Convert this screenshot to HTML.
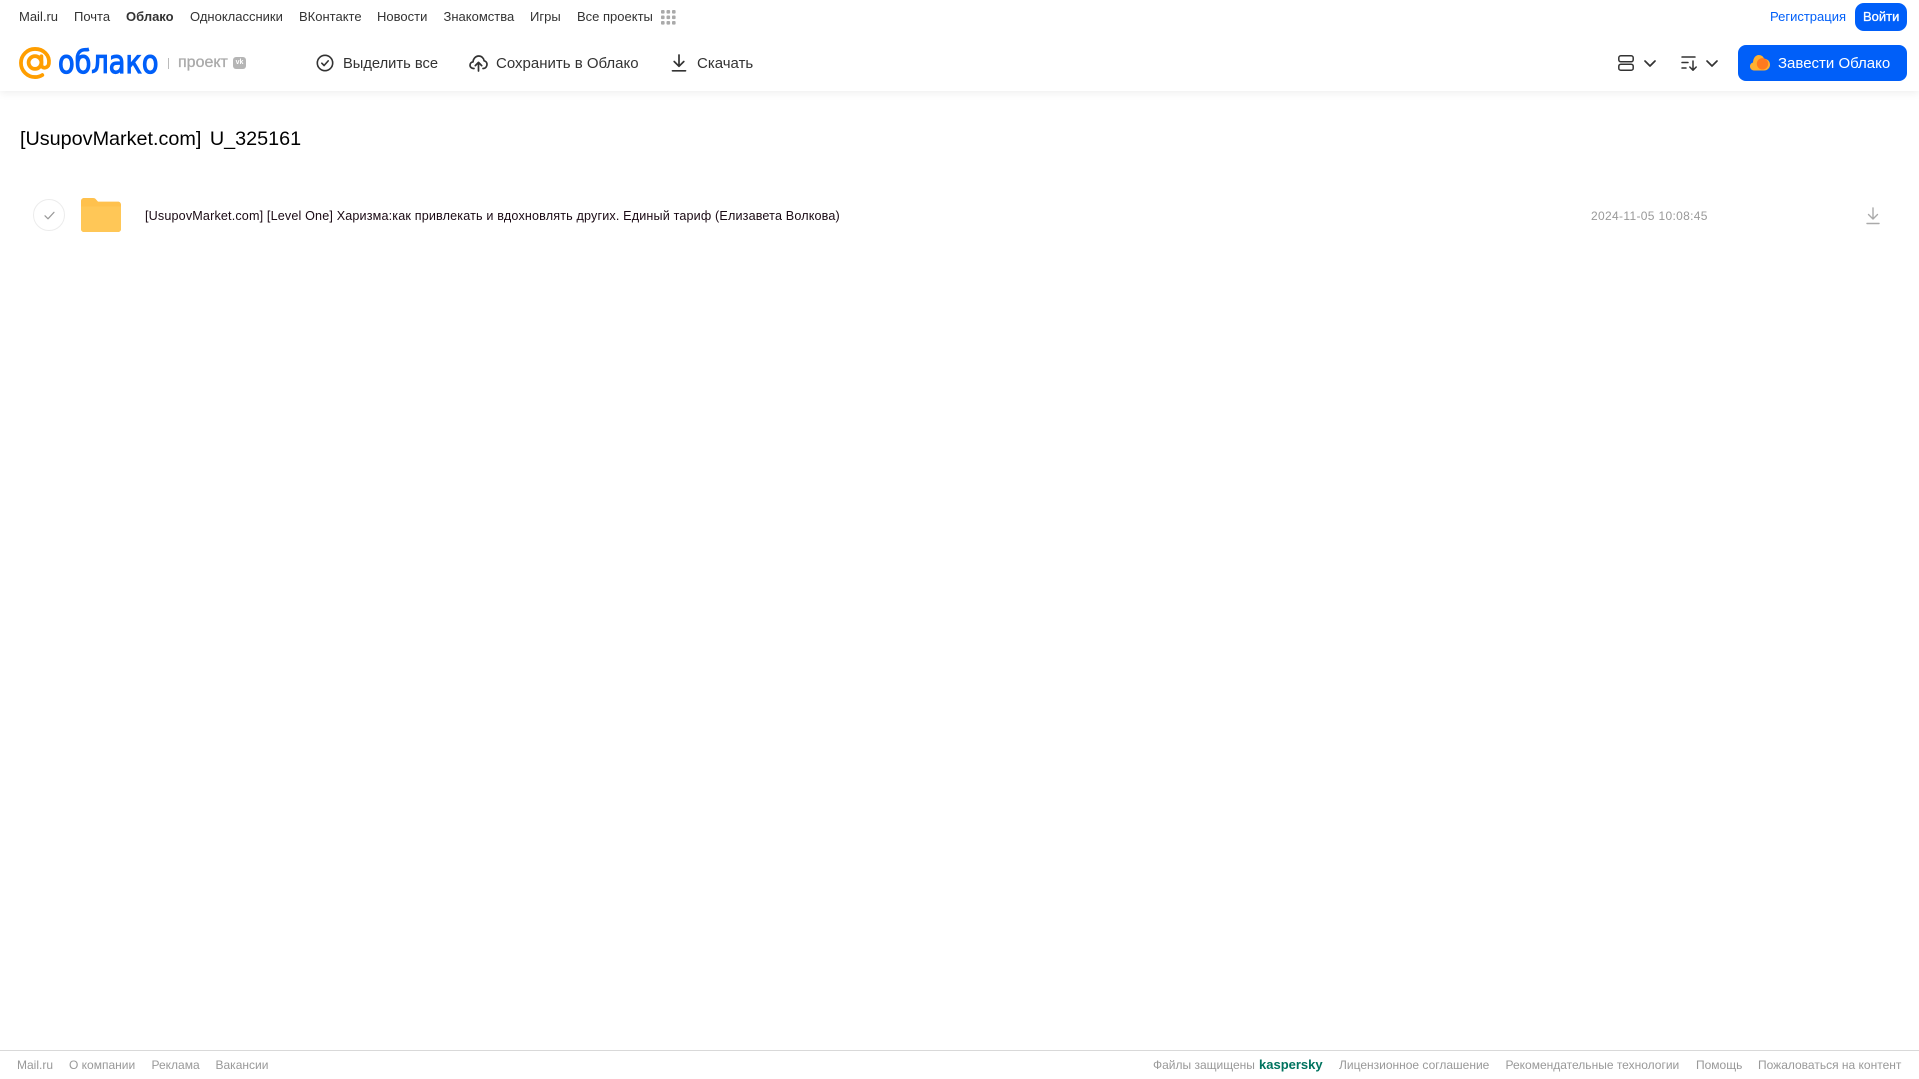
<!DOCTYPE html>
<html lang="ru">
<head>
<meta charset="utf-8">
<title>[UsupovMarket.com] U_325161</title>
<style>
html,body{margin:0;padding:0;background:#fff;}
body{width:1919px;height:1079px;position:relative;overflow:hidden;font-family:"Liberation Sans",Arial,sans-serif;}
.t{position:absolute;white-space:nowrap;line-height:20px;}
.n{top:7px;font-size:13px;color:#333;}
.b{top:54px;font-size:15px;color:#333;}
.f{top:1055px;font-size:12px;color:#999;}
svg{position:absolute;display:block;overflow:visible;}
#hdr{position:absolute;left:0;top:0;width:1919px;height:91px;background:#fff;box-shadow:0 2px 8px rgba(0,0,0,.07);}
</style>
</head>
<body>
<div id="hdr"></div>

<span class="t n" style="left:19px">Mail.ru</span>
<span class="t n" style="left:74px">Почта</span>
<span class="t n" style="left:126px;font-weight:bold">Облако</span>
<span class="t n" style="left:190px">Одноклассники</span>
<span class="t n" style="left:299px">ВКонтакте</span>
<span class="t n" style="left:377px">Новости</span>
<span class="t n" style="left:443.500px">Знакомства</span>
<span class="t n" style="left:530px">Игры</span>
<span class="t n" style="left:577px">Все проекты</span>
<svg style="left:661px;top:10px" width="15" height="15" fill="#aaa"><rect x="0" y="0" width="3.6" height="3.6" rx="1"/><rect x="5.5" y="0" width="3.6" height="3.6" rx="1"/><rect x="11" y="0" width="3.6" height="3.6" rx="1"/><rect x="0" y="5.5" width="3.6" height="3.6" rx="1"/><rect x="5.5" y="5.5" width="3.6" height="3.6" rx="1"/><rect x="11" y="5.5" width="3.6" height="3.6" rx="1"/><rect x="0" y="11" width="3.6" height="3.6" rx="1"/><rect x="5.5" y="11" width="3.6" height="3.6" rx="1"/><rect x="11" y="11" width="3.6" height="3.6" rx="1"/></svg>

<span class="t n" style="left:1770px;color:#005ff9">Регистрация</span>
<div style="position:absolute;left:1855px;top:3px;width:52px;height:28px;border-radius:9px;background:#005ff9"></div>
<span class="t n" style="left:1863px;color:#fff;font-size:13px;-webkit-text-stroke:.3px #fff">Войти</span>

<svg style="left:19px;top:47px" width="32" height="32" viewBox="0 0 33 33" fill="none" stroke="#ff9e00" stroke-width="3.9" stroke-linecap="round"><circle cx="16.5" cy="16" r="6.6"/><path d="M23.1 9.5v8.6c0 4.6 6.9 4.4 7.7-.9C32 8.300 25 2 16.500 2 8.500 2 2 8.500 2 16.500S8.500 31 16.500 31c3 0 5.500-.8 7.500-2.100"/></svg>
<span class="t" style="left:58px;top:46px;font-size:32px;line-height:32px;color:#005ff9;-webkit-text-stroke:1.2px #005ff9;font-family:'DejaVu Sans','Liberation Sans',sans-serif;transform-origin:0 50%;transform:scaleX(.85)">облако</span>
<div style="position:absolute;left:168px;top:58px;width:1px;height:11px;background:#bbb"></div>
<span class="t" style="left:178px;top:53px;font-size:16px;color:#aaa;-webkit-text-stroke:.3px #aaa">проект</span>
<div style="position:absolute;left:233px;top:57px;width:13px;height:12px;border-radius:3px;background:#b5b5b5;color:#fff;font-size:7px;font-weight:bold;line-height:12px;text-align:center">vk</div>

<svg style="left:316px;top:54px" width="18" height="18" viewBox="0 0 18 18" fill="none" stroke="#333" stroke-width="1.6" stroke-linecap="round" stroke-linejoin="round"><circle cx="9" cy="9" r="7.700"/><path d="M5.800 9.200l2.300 2.300 4.100-4.600"/></svg>
<span class="t b" style="left:343px;font-size:14.700px">Выделить все</span>

<svg style="left:469px;top:54px" width="19" height="18" viewBox="0 0 19 18" fill="none" stroke="#333" stroke-width="1.7" stroke-linecap="round" stroke-linejoin="round"><path d="M5 14.500H4.500C2.500 14.500 1 13 1 11.200c0-1.700 1.300-3.100 3-3.300C4.300 4.600 6.700 2 9.700 2c2.800 0 5 2 5.400 4.800 1.700.3 2.900 1.800 2.900 3.600 0 2.200-1.600 4.100-3.800 4.100H14"/><path d="M9.500 17V9M6.300 11.600l3.200-3.200 3.200 3.200"/></svg>
<span class="t b" style="left:496px">Сохранить в Облако</span>

<svg style="left:671px;top:54px" width="16" height="18" viewBox="0 0 16 18" fill="none" stroke="#333" stroke-width="1.700" stroke-linecap="round" stroke-linejoin="round"><path d="M8 1v11M3.200 7.500L8 12.300l4.800-4.800"/><path d="M1.500 16.800h13"/></svg>
<span class="t b" style="left:697px">Скачать</span>

<svg style="left:1618px;top:55px" width="16" height="16" viewBox="0 0 16 16" fill="none" stroke="#333" stroke-width="1.500"><rect x=".8" y=".8" width="14.400" height="6" rx="2"/><rect x=".8" y="9.200" width="14.400" height="6" rx="2"/></svg>
<svg style="left:1644px;top:60px" width="12" height="7" viewBox="0 0 12 7" fill="none" stroke="#333" stroke-width="1.700" stroke-linecap="round" stroke-linejoin="round"><path d="M1 1l5 5 5-5"/></svg>
<svg style="left:1681px;top:55px" width="17" height="16" viewBox="0 0 17 16" fill="none" stroke="#333" stroke-width="1.500" stroke-linecap="round" stroke-linejoin="round"><path d="M1 2h13M1 7.500h6M1 13h4"/><path d="M12 6v9M8.800 12l3.200 3.200 3.200-3.200"/></svg>
<svg style="left:1706px;top:60px" width="12" height="7" viewBox="0 0 12 7" fill="none" stroke="#333" stroke-width="1.700" stroke-linecap="round" stroke-linejoin="round"><path d="M1 1l5 5 5-5"/></svg>

<div style="position:absolute;left:1738px;top:45px;width:169px;height:36px;border-radius:8px;background:#005ff9"></div>
<svg style="left:1750px;top:54px" width="20" height="17" viewBox="0 0 20 17"><path d="M4 16.500C1.800 16.500 0 14.700 0 12.400c0-1.900 1.300-3.500 3-3.900C3.200 4.300 5.500 1 8.800 1c2.500 0 4.500 1.500 5.300 3.700 3.300 0 5.900 2.500 5.900 5.900 0 3.300-2.600 5.900-5.900 5.900z" fill="#ffb030"/><circle cx="12.500" cy="9.800" r="5.700" fill="#ff7a1f"/></svg>
<span class="t" style="left:1778px;top:54px;font-size:15px;color:#fff">Завести Облако</span>

<span class="t" style="left:20px;top:127px;font-size:19.800px;line-height:24px;color:#000;word-spacing:3px">[UsupovMarket.com] U_325161</span>

<div style="position:absolute;left:33px;top:199px;width:30px;height:30px;border:1px solid #ececec;border-radius:50%"></div>
<svg style="left:44px;top:211px" width="11" height="9" viewBox="0 0 11 9" fill="none" stroke="#999" stroke-width="1.200" stroke-linecap="round" stroke-linejoin="round"><path d="M1 4.800l3 3 6-6.500"/></svg>

<svg style="left:81px;top:198px" width="40" height="34" viewBox="0 0 40 34"><path d="M0 3C0 1.300 1.300 0 3 0h9c1.500 0 2.500.6 3.300 1.700L17 3.600h20c1.700 0 3 1.300 3 3V31c0 1.700-1.300 3-3 3H3c-1.700 0-3-1.300-3-3z" fill="#ffc14d"/><path d="M0 8.500h40V31c0 1.700-1.300 3-3 3H3c-1.700 0-3-1.300-3-3z" fill="#ffc757"/></svg>

<span class="t" style="left:145px;top:206px;color:#1a0a14;letter-spacing:.155px;font-size:12.600px">[UsupovMarket.com] [Level One] Харизма:как привлекать и вдохновлять других. Единый тариф (Елизавета Волкова)</span>
<span class="t" style="left:1591px;top:206px;font-size:12px;color:#999;letter-spacing:.33px">2024-11-05 10:08:45</span>
<svg style="left:1866px;top:207px" width="14" height="18" viewBox="0 0 14 18" fill="none" stroke="#aaa" stroke-width="1.400" stroke-linecap="round" stroke-linejoin="round"><path d="M7 1v11M2.500 7.500L7 12l4.500-4.500"/><path d="M1 16.500h12"/></svg>

<div style="position:absolute;left:0;top:1050px;width:1919px;height:1px;background:#d9d9d9"></div>
<span class="t f" style="left:17px">Mail.ru</span>
<span class="t f" style="left:69px">О компании</span>
<span class="t f" style="left:151.500px">Реклама</span>
<span class="t f" style="left:215.500px">Вакансии</span>
<span class="t f" style="left:1153px">Файлы защищены</span>
<span class="t f" style="left:1259px;color:#00735f;font-weight:bold;font-size:13px">kaspersky</span>
<span class="t f" style="left:1339px">Лицензионное соглашение</span>
<span class="t f" style="left:1505.500px">Рекомендательные технологии</span>
<span class="t f" style="left:1696px">Помощь</span>
<span class="t f" style="left:1758px">Пожаловаться на контент</span>
</body>
</html>
